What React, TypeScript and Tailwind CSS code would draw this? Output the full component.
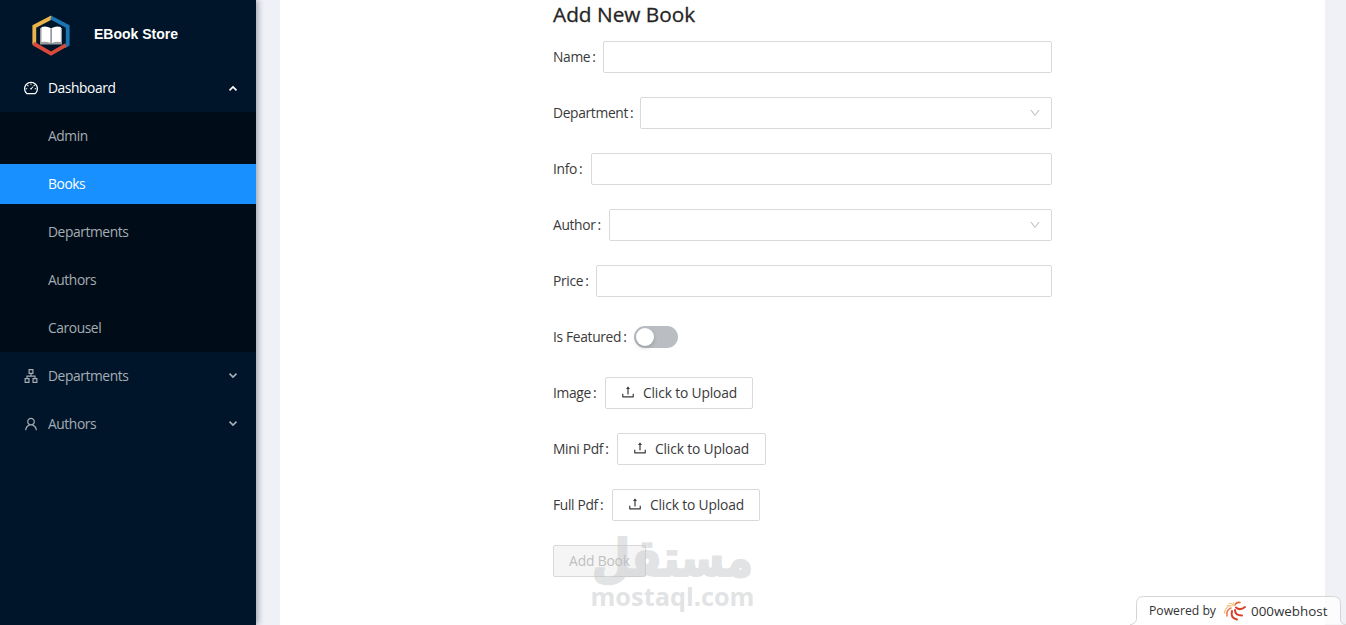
import React, { useState } from "react";
import {
    AiOutlineApartment,
    AiOutlineDashboard,
    AiOutlineDown,
    AiOutlineUpload,
    AiOutlineUser,
} from "react-icons/ai";

const subItems = ["Admin", "Books", "Departments", "Authors", "Carousel"];

function Logo() {
    return (
        <svg width="40" height="42" viewBox="0 0 40 42" className="mt-[3px] ml-[31px]">
            <g fill="none" strokeWidth="3.8">
                <path d="M3.3 29.5V11.5L21 2.2" stroke="#e9b44c" />
                <path d="M20 2.6L36.7 11.5V29.5L33.5 31.3" stroke="#1b75b3" />
                <path d="M2.5 28.5L20 38.6L34.8 30.2" stroke="#d84a3a" />
            </g>
            <path d="M9 13v16.5h22V13z" fill="#9a9da2" />
            <path d="M10.5 12q5-1.500 9 1v15q-4-2-9-1zM29.800 12q-5-1.500-9 1v15q4-2 9-1z" fill="#fff" />
            <path d="M20.100 14v15" stroke="#8a8d92" strokeWidth="1" />
        </svg>
    );
}

function Caret({ open }: { open?: boolean }) {
    return (
        <svg width="10" height="7" viewBox="0 0 10 7" fill="none" className={open ? "mt-px rotate-180" : "-mt-px"}>
            <path d="M1.500 1.700L5 5L8.500 1.700" stroke="currentColor" strokeWidth="1.700" />
        </svg>
    );
}

function Sidebar() {
    const [selected, setSelected] = useState<string>("Books");

    return (
        <aside className="z-10 w-64 shrink-0 bg-[#001529] text-[13.8px] tracking-[-0.41px] text-[#a6adb4] shadow-[2px_0_6px_rgba(0,21,41,0.35)]">
            <div className="flex h-[68px] items-center">
                <Logo />
                <h1 className="ml-[23px] font-['Liberation_Sans',sans-serif] text-[14px] font-bold tracking-normal text-white">EBook Store</h1>
            </div>
            <div className="flex h-10 items-center pr-[18px] pl-[23px] text-white">
                <AiOutlineDashboard size={16} />
                <span className="ml-[9px] flex-1">Dashboard</span>
                <Caret open />
            </div>
            <ul className="mt-1 flex flex-col gap-2 bg-[#000c17] py-1">
                {subItems.map((item) => (
                    <li
                        key={item}
                        onClick={() => setSelected(item)}
                        className={`flex h-10 cursor-pointer items-center pl-12 ${item === selected ? "bg-[#1890ff] text-white" : ""}`}
                    >
                        {item}
                    </li>
                ))}
            </ul>
            <div className="mt-1 flex h-10 items-center pr-[18px] pl-[23px]">
                <AiOutlineApartment size={16} />
                <span className="ml-[9px] flex-1">Departments</span>
                <Caret />
            </div>
            <div className="mt-2 flex h-10 items-center pr-[18px] pl-[23px]">
                <AiOutlineUser size={16} />
                <span className="ml-[9px] flex-1">Authors</span>
                <Caret />
            </div>
        </aside>
    );
}

function Row({ label, width, children }: { label: string; width: string; children: React.ReactNode }) {
    return (
        <div className="mb-6 flex h-8 items-center">
            <label className={`shrink-0 whitespace-nowrap ${width}`}>
                {label}
                <span className="ml-0.5">:</span>
            </label>
            {children}
        </div>
    );
}

function TextField() {
    return <input className="h-8 min-w-0 flex-1 rounded-[2px] border border-[#d9d9d9] px-3 outline-none" />;
}

function SelectField() {
    return (
        <div className="flex h-8 flex-1 items-center justify-end rounded-[2px] border border-[#d9d9d9] pr-2.5">
            <AiOutlineDown size={12} className="text-[#bfbfbf]" />
        </div>
    );
}

function UploadButton({ width }: { width: string }) {
    return (
        <button className={`flex h-8 items-center rounded-[2px] border border-[#d9d9d9] pl-[14px] ${width}`}>
            <AiOutlineUpload size={16} className="-mt-0.5" />
            <span className="ml-[7px] tracking-[-0.15px] whitespace-nowrap">Click to Upload</span>
        </button>
    );
}

function BookForm() {
    const [featured, setFeatured] = useState<boolean>(false);

    return (
        <div className="ml-[273px] w-[499px] text-[13.8px] tracking-[-0.33px] text-[#3a3a3a]">
            <h4 className="mb-[13px] text-[20.8px] leading-[28px] font-medium tracking-normal text-[#262626] [-webkit-text-stroke:0.3px_#262626]">
                Add New Book
            </h4>
            <Row label="Name" width="w-[50px]"><TextField /></Row>
            <Row label="Department" width="w-[87px]"><SelectField /></Row>
            <Row label="Info" width="w-[38px]"><TextField /></Row>
            <Row label="Author" width="w-[56px]"><SelectField /></Row>
            <Row label="Price" width="w-[43px]"><TextField /></Row>
            <Row label="Is Featured" width="w-[81px]">
                <button
                    onClick={() => setFeatured(!featured)}
                    className={`flex h-[22px] w-11 items-center rounded-full p-0.5 ${featured ? "justify-end bg-[#1890ff]" : "bg-[#babec2]"}`}
                >
                    <span className="size-[18px] rounded-full bg-white shadow-[0_2px_4px_rgba(0,35,11,0.2)]" />
                </button>
            </Row>
            <Row label="Image" width="w-[52px]"><UploadButton width="w-[148px]" /></Row>
            <Row label="Mini Pdf" width="w-[64px]"><UploadButton width="w-[149px]" /></Row>
            <Row label="Full Pdf" width="w-[59px]"><UploadButton width="w-[148px]" /></Row>
            <button disabled className="h-8 w-[93px] rounded-[2px] border border-[#d9d9d9] bg-[#f5f5f5] pt-px tracking-[-0.15px] text-[#bfbfbf]">
                Add Book
            </button>
        </div>
    );
}

function Watermark() {
    return (
        <svg width="170" height="80" viewBox="0 0 170 80" className="pointer-events-none absolute top-[535px] left-[588px] z-10 overflow-visible opacity-45" fill="#bfc2c5">
            <text x="4" y="41" direction="ltr" textLength="161" lengthAdjust="spacingAndGlyphs" fontFamily="'DejaVu Sans', sans-serif" fontWeight="700" fontSize="51" stroke="#bfc2c5" strokeWidth="2.200" strokeLinejoin="round">مستقل</text>
            <text x="2.500" y="71" textLength="164" lengthAdjust="spacingAndGlyphs" fontFamily="'Open Sans', sans-serif" fontWeight="700" fontSize="25">mostaql.com</text>
        </svg>
    );
}

function HostBadge() {
    return (
        <div className="absolute right-0 bottom-0 z-20 h-[29px] w-[216px]">
            <svg width="216" height="29" viewBox="0 0 216 29" className="absolute inset-0">
                <path d="M0 28.500q5 0 6.500-5V7.500q0-7 7-7h190q7 0 7 7V23q0 5.500 5.500 5.500" fill="#fff" fillOpacity="0.8" stroke="#d5d5d5" />
            </svg>
            <div className="relative flex h-[29px] items-center pl-[19px] text-[#333]">
                <span className="w-[74px] pt-0.5 text-[12.2px] whitespace-nowrap">Powered by</span>
                <svg width="24" height="20" viewBox="0 0 24 20" fill="none" strokeLinecap="round">
                    <path d="M6.500 5Q2 7 1.500 12" stroke="#f3c080" strokeWidth="1.300" />
                    <path d="M8 7Q3 9 4 15" stroke="#ed7750" strokeWidth="1.500" />
                    <path d="M9 10Q7 17 14 18.500" stroke="#d9402a" strokeWidth="2" />
                    <path d="M12 9Q12 14.500 19 14.500" stroke="#d9402a" strokeWidth="2" />
                    <path d="M13 6.500Q17 10 22 6" stroke="#d9402a" strokeWidth="2" />
                    <path d="M12 4Q13.500 0.800 17 1.500" stroke="#e8653f" strokeWidth="1.500" />
                    <path d="M6 2.500q3-.5 4 1.500M4 4.500q3-.5 5 .5M10.500 1.500l.5 3" stroke="#f6cb8a" strokeWidth="1.200" />
                </svg>
                <span className="ml-1 pt-px text-[13.4px] font-medium whitespace-nowrap">000webhost</span>
            </div>
        </div>
    );
}

export default function App() {
    return (
        <div className="relative flex h-[625px] w-[1346px] overflow-hidden bg-[#f0f1f6] font-['Open_Sans','Noto_Sans',sans-serif]">
            <Sidebar />
            <main className="ml-6 w-[1045px] bg-white">
                <BookForm />
            </main>
            <Watermark />
            <HostBadge />
        </div>
    );
}
